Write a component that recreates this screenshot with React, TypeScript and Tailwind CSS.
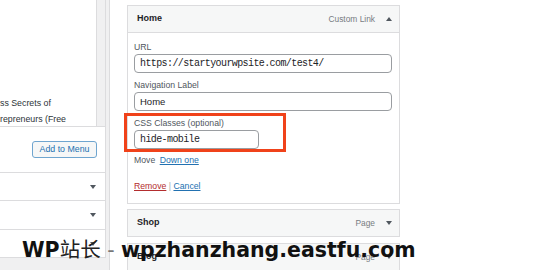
import React from 'react';

const ui = { fontFamily: '"Liberation Sans", Arial, sans-serif' };
const mono = { fontFamily: '"Liberation Mono", "DejaVu Sans Mono", monospace' };

const Tri = ({ up = false }: { up?: boolean }) => (
  <svg width="6" height="4" viewBox="0 0 6 4" className="shrink-0 block">
    <path d={up ? 'M0 4 L3 0 L6 4 Z' : 'M0 0 L6 0 L3 4 Z'} fill="#50575e" />
  </svg>
);

const ItemBar = ({ title, type, open = false, className = '' }: { title: string; type: string; open?: boolean; className?: string }) => (
  <div className={`h-[28px] bg-[#f6f7f7] border border-[#dcdcde] flex items-center pl-[9px] pr-[7px] ${className}`}>
    <span className="text-[9px] font-bold text-[#1d2327]">{title}</span>
    <span className="ml-auto text-[8.4px] text-[#787c82]">{type}</span>
    <span className="ml-[11px]">
      <Tri up={open} />
    </span>
  </div>
);

const Field = ({ label, value, isMono = false, width = 'w-[258px]' }: { label: string; value: string; isMono?: boolean; width?: string }) => (
  <div>
    <div className="text-[8.7px] leading-[11px] text-[#50575e]">{label}</div>
    <input
      readOnly
      value={value}
      style={isMono ? mono : ui}
      className={`mt-[1px] block h-[19px] ${width} rounded-[4px] border border-[#9a9da1] bg-white px-[5px] text-[#1d2327] outline-none ${
        isMono ? 'text-[10px] tracking-[-0.6px]' : 'text-[9.5px]'
      }`}
    />
  </div>
);

export default function App() {
  return (
    <div className="relative w-[550px] h-[270px] overflow-hidden bg-[#f0f0f1] flex" style={ui}>
      {/* left: add menu items */}
      <div className="w-[106px] shrink-0 flex flex-col">
        <div className="bg-white border-r border-b border-[#dcdcde]">
          <div className="h-[127px] flex border-b border-[#dcdcde]">
            <div className="w-[97px] border-r border-[#dcdcde] overflow-hidden pt-[95px] text-[8.8px] leading-[16px] text-[#2c3338] whitespace-nowrap">
              <div>ss Secrets of</div>
              <div>repreneurs (Free</div>
            </div>
            <div className="flex-1 bg-[#f0f0f1]" />
          </div>
          <div className="pt-[8px] pl-[32px]">
            <button className="w-[65px] h-[17px] rounded-[3px] border border-[#6fa5cf] bg-[#f6f7f7] text-[8.8px] text-[#2271b1]">
              Add to Menu
            </button>
          </div>
          <div className="mt-[13px]">
            {[28, 29, 28].map((h, i) => (
              <div
                key={i}
                style={{ height: h }}
                className="border-t border-[#dcdcde] flex items-center justify-end pr-[9px]"
              >
                <Tri />
              </div>
            ))}
          </div>
        </div>
      </div>

      <div className="w-[3px] shrink-0" />

      {/* right: menu structure */}
      <div className="flex-1 bg-white border-l border-[#dcdcde] pl-[17px] pt-[5px]">
        <div className="w-[273px]">
          <ItemBar title="Home" type="Custom Link" open />
          <div className="border-x border-b border-[#dcdcde] px-[6px] pt-[9px] pb-[11px]">
            <Field label="URL" value="https://startyourwpsite.com/test4/" isMono />
            <div className="mt-[7px]">
              <Field label="Navigation Label" value="Home" />
            </div>
            <div className="relative mt-[7px]">
              <Field label="CSS Classes (optional)" value="hide-mobile" isMono width="w-[125px]" />
              <span className="absolute left-[-10px] top-[-5px] w-[162px] h-[39px] border-[3px] border-[#f0421a]" />
            </div>
            <div className="mt-[6px] text-[8.7px] leading-[11px] text-[#50575e]">
              Move <a className="ml-[2px] text-[#2271b1] underline">Down one</a>
            </div>
            <div className="mt-[15px] text-[8.7px] leading-[11px] text-[#a7aaad]">
              <a className="text-[#b32d2e] underline">Remove</a> | <a className="text-[#2271b1] underline">Cancel</a>
            </div>
          </div>
          <ItemBar title="Shop" type="Page" className="mt-[5px]" />
          <ItemBar title="Blog" type="Page" className="mt-[6px]" />
        </div>
      </div>

      {/* watermark */}
      <div
        className="absolute left-[22px] top-[236px] text-[20.5px] leading-[24px] font-bold text-[#111] whitespace-nowrap"
        style={{ fontFamily: '"DejaVu Sans", "Noto Sans CJK SC", sans-serif' }}
      >
        WP<span className="font-normal text-[#222]" style={{ fontFamily: '"Noto Sans CJK SC", sans-serif' }}>站长</span>
        <span className="font-normal text-[#777]"> - </span>
        wpzhanzhang.eastfu.com
      </div>
    </div>
  );
}
